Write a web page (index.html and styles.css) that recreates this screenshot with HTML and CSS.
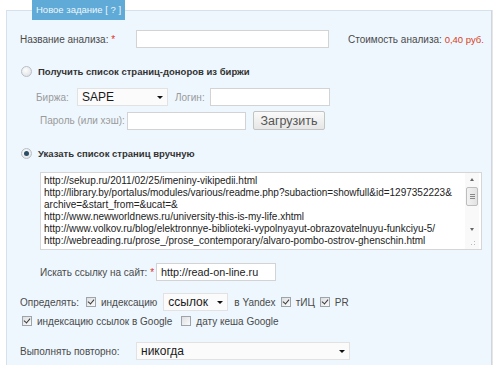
FILE: index.html
```html
<!DOCTYPE html>
<html lang="ru">
<head>
    <meta charset="UTF-8">
    <meta name="viewport" content="width=device-width, initial-scale=1.0">
    <title>Новое задание</title>
    <link rel="stylesheet" href="styles.css">
</head>
<body>
    <fieldset class="task">
        <legend>Новое задание [ ? ]</legend>

        <div class="row row-name">
            <label class="lbl lbl-name" for="name">Название анализа: <span class="req">*</span></label>
            <input type="text" id="name" class="field field-name">
            <span class="cost">Стоимость анализа: <span class="price">0,40 руб.</span></span>
        </div>

        <div class="row row-radio row-first">
            <input type="radio" name="source" class="radio" id="src-exchange">
            <label class="radio-label" for="src-exchange">Получить список страниц-доноров из биржи</label>
        </div>

        <div class="row row-exchange">
            <span class="lbl-muted lbl-birzha">Биржа:</span>
            <span class="select select-birzha"><select><option>SAPE</option></select></span>
            <span class="lbl-muted lbl-login">Логин:</span>
            <input type="text" class="field field-login">
        </div>

        <div class="row row-pass">
            <span class="lbl-muted lbl-pass">Пароль (или хэш):</span>
            <input type="text" class="field field-pass">
            <button class="btn">Загрузить</button>
        </div>

        <div class="row row-radio row-second">
            <input type="radio" name="source" class="radio" id="src-manual" checked>
            <label class="radio-label" for="src-manual">Указать список страниц вручную</label>
        </div>

        <div class="textarea">
            <div class="lines">http://sekup.ru/2011/02/25/imeniny-vikipedii.html
http://library.by/portalus/modules/various/readme.php?subaction=showfull&amp;id=1297352223&amp;
archive=&amp;start_from=&amp;ucat=&amp;
http://www.newworldnews.ru/university-this-is-my-life.xhtml
http://www.volkov.ru/blog/elektronnye-biblioteki-vypolnyayut-obrazovatelnuyu-funkciyu-5/
http://webreading.ru/prose_/prose_contemporary/alvaro-pombo-ostrov-ghenschin.html</div>
            <div class="scrollbar">
                <span class="arrow arrow-up"></span>
                <span class="thumb"><i></i><i></i><i></i></span>
                <span class="track"></span>
                <span class="arrow arrow-down"></span>
                <span class="resizer"></span>
            </div>
        </div>

        <div class="row row-site">
            <label class="lbl lbl-site">Искать ссылку на сайт: <span class="req">*</span></label>
            <input type="text" class="field field-site" value="http://read-on-line.ru">
        </div>

        <div class="row row-detect">
            <span class="lbl">Определять:</span>
            <input type="checkbox" class="chk chk-first" checked>
            <span>индексацию</span>
            <span class="select select-links"><select><option>ссылок</option></select></span>
            <span>в Yandex</span>
            <input type="checkbox" class="chk" checked>
            <span>тИЦ</span>
            <input type="checkbox" class="chk" checked>
            <span>PR</span>
        </div>

        <div class="row row-google">
            <input type="checkbox" class="chk" checked>
            <span>индексацию ссылок в Google</span>
            <input type="checkbox" class="chk chk-cache">
            <span>дату кеша Google</span>
        </div>

        <div class="row row-repeat">
            <span class="lbl lbl-repeat">Выполнять повторно:</span>
            <span class="select select-repeat"><select><option>никогда</option></select></span>
        </div>
    </fieldset>
</body>
</html>
```

FILE: styles.css
```css
body {
    font-family: "Liberation Sans", Arial, sans-serif;
    font-size: 10px;
    color: #4a4a4a;
    margin: 0;
    padding: 0;
    background-color: #fff;
}
.task {
    margin: 0 8px 0 6px;
    padding: 10px 13px 20px 13px;
    border: 1px solid #d5e1eb;
    border-right-color: #cfd6dc;
    box-shadow: 1px 0 0 #e6e6e6;
    background-color: #eef7fe;
    min-width: 0;
}
.task legend {
    margin-left: 12px;
    background-color: #5faad6;
    color: #eef6fb;
    font-size: 9.5px;
    line-height: 20px;
    height: 20px;
    padding: 0 4px;
}
.row {
    display: flex;
    align-items: center;
    white-space: nowrap;
}
.row > * {
    flex-shrink: 0;
}
.req {
    color: #e0302a;
}
.field {
    box-sizing: border-box;
    height: 18px;
    border: 1px solid #d3d3d3;
    background: #fff;
    font-family: "Liberation Sans", Arial, sans-serif;
    font-size: 10.8px;
    color: #222;
    padding: 0 4px;
    margin: 0;
    outline: none;
}

/* first row */
.row-name {
    height: 18px;
}
.lbl-name {
    width: 116px;
}
.field-name {
    width: 193px;
}
.cost {
    margin-left: 19px;
}
.price {
    color: #d8401c;
    font-size: 9.5px;
}

/* radios */
.row-radio {
    height: 14px;
}
.row-first {
    margin-top: 16px;
}
.row-second {
    margin-top: 16px;
}
.radio {
    appearance: none;
    -webkit-appearance: none;
    box-sizing: border-box;
    width: 11px;
    height: 11px;
    margin: 0 0 0 1px;
    border: 1px solid #b9bfc4;
    border-radius: 50%;
    background: radial-gradient(circle at 40% 35%, #fdfdfd, #d9dde0);
    display: flex;
    align-items: center;
    justify-content: center;
}
.radio:checked::after {
    content: "";
    width: 5px;
    height: 5px;
    border-radius: 50%;
    background: #2b4e66;
}
.radio-label {
    margin-left: 6px;
    font-weight: bold;
    font-size: 9.5px;
    color: #333;
}

/* exchange block */
.lbl-muted {
    color: #9a9a9a;
}
.row-exchange {
    margin-top: 10px;
    height: 18px;
    padding-left: 16px;
}
.lbl-birzha {
    width: 41px;
}
.select-birzha {
    width: 91px;
}
.lbl-login {
    margin-left: 7px;
    width: 35px;
}
.field-login {
    width: 120px;
}
.row-pass {
    margin-top: 5px;
    height: 19px;
    padding-left: 20px;
}
.lbl-pass {
    width: 87px;
}
.field-pass {
    width: 119px;
}
.btn {
    box-sizing: border-box;
    margin-left: 7px;
    width: 72px;
    height: 19px;
    padding: 0;
    border: 1px solid #c3c3c3;
    border-radius: 2px;
    background: linear-gradient(#fafafa, #e6e6e6);
    font-family: "Liberation Sans", Arial, sans-serif;
    font-size: 12.5px;
    color: #555;
}

/* selects */
.select {
    position: relative;
    display: block;
    height: 18px;
}
.select select {
    appearance: none;
    -webkit-appearance: none;
    box-sizing: border-box;
    width: 100%;
    height: 18px;
    margin: 0;
    padding: 0 0 0 4px;
    border: 1px solid #e2e2e2;
    background: #fbfbfb;
    font-family: "Liberation Sans", Arial, sans-serif;
    font-size: 12px;
    color: #1a1a1a;
    outline: none;
}
.select::after {
    content: "";
    position: absolute;
    right: 5px;
    top: 8px;
    border-left: 3px solid transparent;
    border-right: 3px solid transparent;
    border-top: 3px solid #111;
}

/* textarea */
.textarea {
    box-sizing: border-box;
    display: flex;
    margin: 12px 0 0 20px;
    width: 442px;
    height: 78px;
    border: 1px solid #d6d6d6;
    background: #fff;
}
.lines {
    flex: 1;
    white-space: pre;
    overflow: hidden;
    padding: 2px 0 0 3px;
    font-size: 10px;
    line-height: 12px;
    color: #222;
}
.scrollbar {
    width: 14px;
    margin-right: 2px;
    display: flex;
    flex-direction: column;
    align-items: center;
    background: #f9f9f9;
}
.arrow {
    width: 14px;
    height: 12px;
    display: flex;
    align-items: center;
    justify-content: center;
}
.arrow::after {
    content: "";
    border-left: 2.5px solid transparent;
    border-right: 2.5px solid transparent;
}
.arrow-up::after {
    border-bottom: 3px solid #666;
}
.arrow-down::after {
    border-top: 3px solid #666;
}
.thumb {
    box-sizing: border-box;
    width: 12px;
    height: 19px;
    margin-top: 2px;
    border: 1px solid #bdbdbd;
    border-radius: 2px;
    background: linear-gradient(90deg, #f2f2f2, #e3e3e3);
    display: flex;
    flex-direction: column;
    align-items: center;
    justify-content: center;
    gap: 1px;
}
.thumb i {
    width: 5px;
    height: 1px;
    background: #888;
}
.track {
    flex: 1;
}
.resizer {
    width: 14px;
    height: 14px;
    background:
        radial-gradient(circle, #bbb 0.7px, transparent 0.8px) 8px 8px / 3px 3px no-repeat,
        radial-gradient(circle, #bbb 0.7px, transparent 0.8px) 5px 8px / 3px 3px no-repeat,
        radial-gradient(circle, #bbb 0.7px, transparent 0.8px) 8px 5px / 3px 3px no-repeat;
}

/* site */
.row-site {
    margin-top: 13px;
    height: 18px;
    padding-left: 20px;
}
.lbl-site {
    width: 116px;
}
.field-site {
    width: 120px;
}

/* checkboxes */
.chk {
    appearance: none;
    -webkit-appearance: none;
    box-sizing: border-box;
    width: 10px;
    height: 10px;
    margin: 0;
    border: 1px solid #9ea4a8;
    background: linear-gradient(135deg, #dcdfe2, #fafafa);
    position: relative;
}
.chk:checked::after {
    content: "";
    position: absolute;
    left: 2px;
    top: 0;
    width: 3px;
    height: 5px;
    border-right: 1.5px solid #3a3a3a;
    border-bottom: 1.5px solid #3a3a3a;
    transform: rotate(40deg);
}
.row-detect {
    margin-top: 12px;
    height: 18px;
    gap: 5px;
}
.row-detect .chk-first {
    margin-left: 2px;
}
.select-links {
    width: 65px;
    margin: 0 1px;
}
.row-google {
    margin-top: 3px;
    height: 14px;
    padding-left: 2px;
    gap: 5px;
}
.chk-cache {
    margin-left: 4px;
}

/* repeat */
.row-repeat {
    margin-top: 14px;
    height: 18px;
}
.lbl-repeat {
    width: 116px;
}
.select-repeat {
    width: 214px;
}
```
